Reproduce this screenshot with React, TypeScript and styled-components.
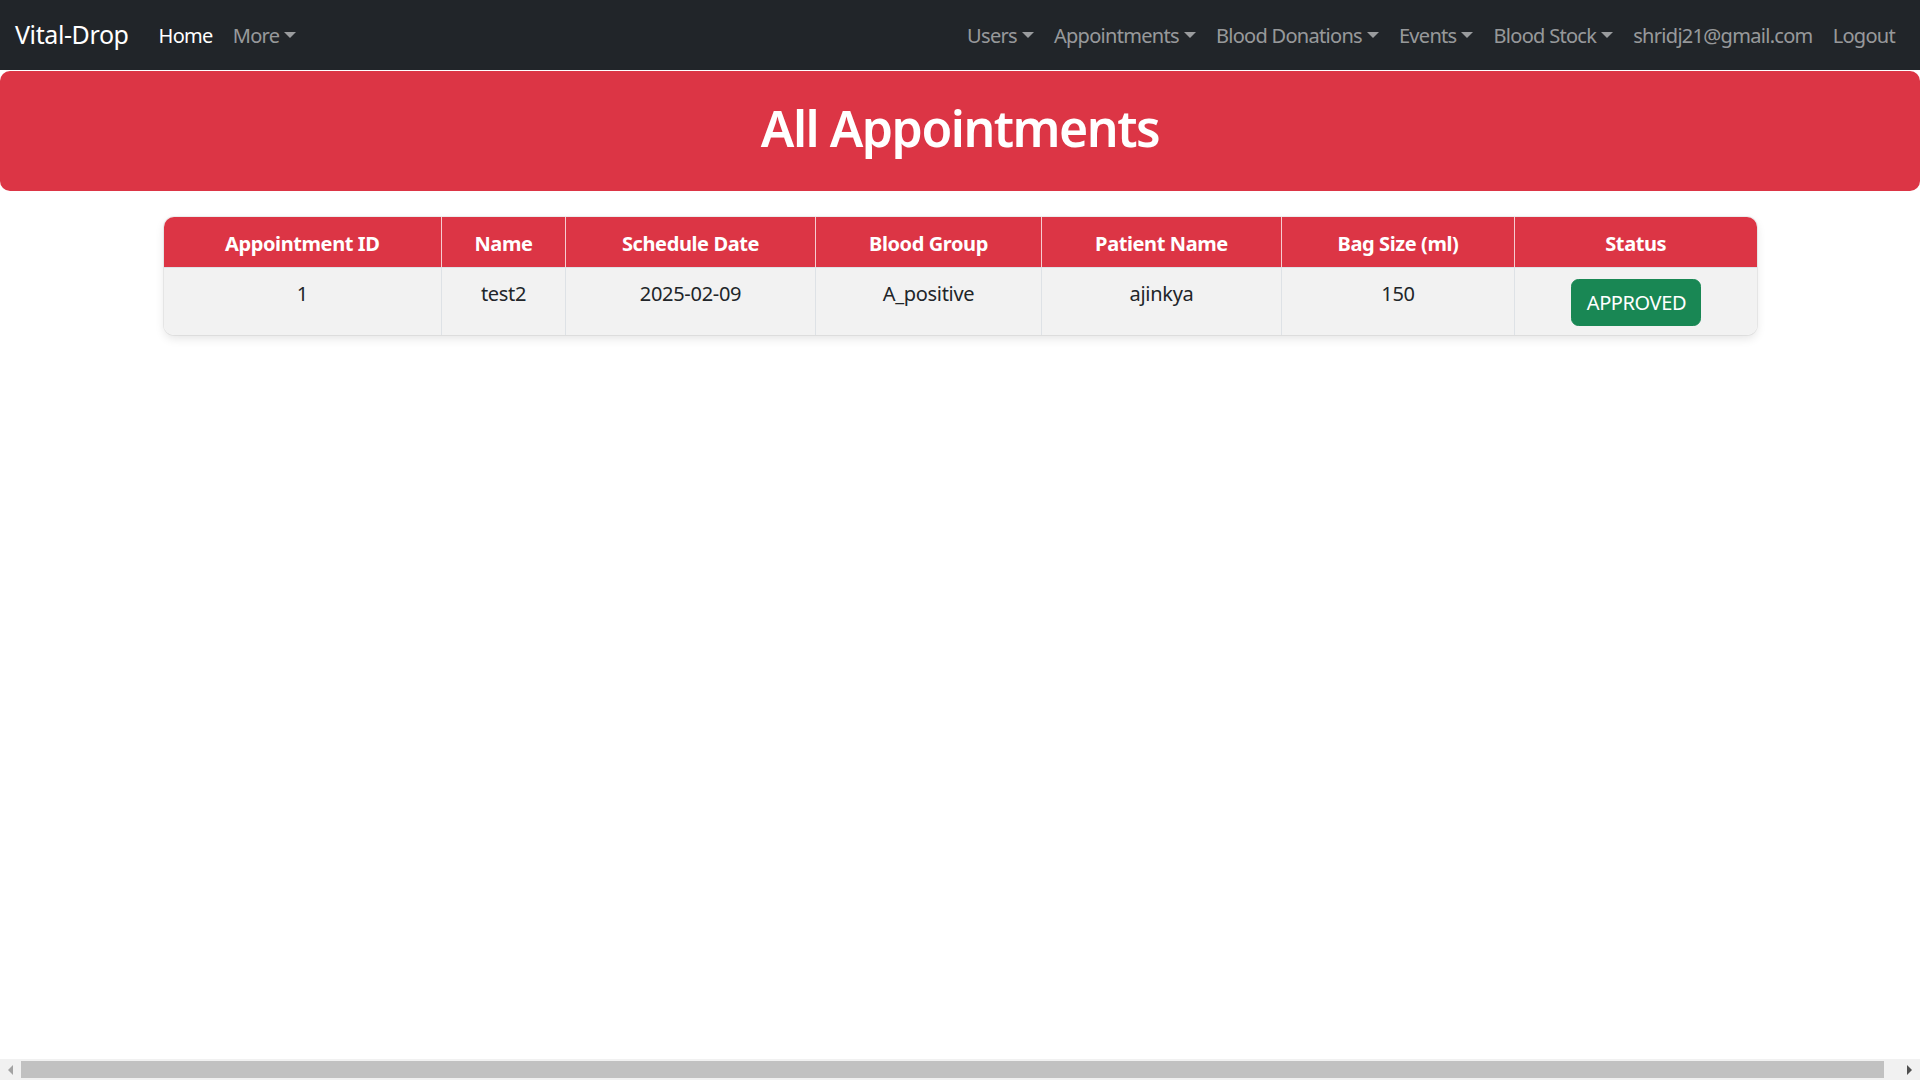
import React from "react";
import styled, { createGlobalStyle } from "styled-components";

const GlobalStyle = createGlobalStyle`
  html, body { margin: 0; padding: 0; overflow: hidden; }
  body {
    font-family: "Noto Sans", "Open Sans", "Liberation Sans", sans-serif;
    font-size: 20px;
    line-height: 1.5;
    color: #212529;
    background: #fff;
  }
  * { box-sizing: border-box; }
`;

const Page = styled.div`
  min-height: 1080px;
  display: flex;
  flex-direction: column;
`;

const Navbar = styled.nav`
  height: 70px;
  background: #212529;
  display: flex;
  align-items: center;
  padding: 0 15px;
`;

const Brand = styled.a`
  font-size: 25px;
  color: #fff;
  margin-right: 20px;
  padding: 6px 0;
  text-decoration: none;
  line-height: 1.5;
  letter-spacing: -0.4px;
`;

const NavGroup = styled.div<{ $right?: boolean }>`
  display: flex;
  align-items: center;
  margin-left: ${(p) => (p.$right ? "auto" : "0")};
`;

const NavLink = styled.a<{ $active?: boolean }>`
  display: flex;
  align-items: center;
  padding: 11px 10px 9px;
  color: ${(p) => (p.$active ? "#fff" : "rgba(255,255,255,0.55)")};
  text-decoration: none;
  font-size: 20px;
  letter-spacing: -0.7px;
`;

const Caret = styled.span`
  display: inline-block;
  margin-left: 5px;
  width: 0;
  height: 0;
  border-top: 6px solid currentColor;
  border-left: 6px solid transparent;
  border-right: 6px solid transparent;
  transform: translateY(-1px);
`;

const Banner = styled.header`
  margin-top: 1px;
  height: 120px;
  background: #dc3545;
  border-radius: 10px;
  display: flex;
  align-items: center;
  justify-content: center;
`;

const Title = styled.h1`
  margin: 0;
  color: #fff;
  font-size: 50px;
  font-weight: 600;
  line-height: 1.2;
  letter-spacing: -1.5px;
  transform: translateY(-3px);
`;

const TableWrap = styled.div`
  width: 1593px;
  margin: 26px auto 0;
  border-radius: 10px;
  overflow: hidden;
  box-shadow: 0 0 0 1px rgba(0, 0, 0, 0.06), 0 4px 10px rgba(0, 0, 0, 0.1);
`;

const Table = styled.table`
  width: 100%;
  border-collapse: collapse;
  table-layout: fixed;
`;

const Col = styled.col<{ $w: number }>`
  width: ${(p) => p.$w}px;
`;

const Th = styled.th`
  background: #dc3545;
  color: #fff;
  font-weight: 700;
  font-size: 20px;
  padding: 12px 10px 8px;
  line-height: 30px;
  text-align: center;
  border-left: 1px solid rgba(255, 255, 255, 0.75);
  border-bottom: 1px solid #dee2e6;
  letter-spacing: -0.4px;
  &:first-child { border-left: none; }
`;

const Td = styled.td`
  background: #f2f2f2;
  padding: 11px 10px 9px;
  line-height: 30px;
  text-align: center;
  vertical-align: top;
  border-left: 1px solid #dee2e6;
  font-size: 20px;
  color: #212529;
  letter-spacing: -0.3px;
  &:first-child { border-left: none; }
`;

const StatusButton = styled.button`
  background: #198754;
  color: #fff;
  border: 1px solid #198754;
  border-radius: 7.5px;
  padding: 8px 15px 7px;
  font-family: inherit;
  font-size: 20px;
  line-height: 30px;
  width: 130px;
  letter-spacing: -0.4px;
`;

const ScrollBar = styled.div`
  position: fixed;
  left: 0;
  right: 0;
  bottom: 0;
  height: 21px;
  background: #f1f1f1;
  display: flex;
  align-items: center;
`;

const ArrowBox = styled.div`
  width: 21px;
  height: 21px;
  display: flex;
  align-items: center;
  justify-content: center;
  flex-shrink: 0;
`;

const Arrow = styled.span<{ $dir: "left" | "right"; $color: string }>`
  width: 0;
  height: 0;
  border-top: 5px solid transparent;
  border-bottom: 5px solid transparent;
  ${(p) =>
    p.$dir === "left"
      ? `border-right: 5px solid ${p.$color};`
      : `border-left: 5px solid ${p.$color};`}
`;

const Thumb = styled.div`
  flex: 1;
  height: 17px;
  background: #c1c1c1;
  margin-right: 15px;
`;

const cols = [278, 124, 250, 226, 240, 233, 242];
const headers = [
  "Appointment ID",
  "Name",
  "Schedule Date",
  "Blood Group",
  "Patient Name",
  "Bag Size (ml)",
  "Status",
];

const rows = [
  {
    id: "1",
    name: "test2",
    date: "2025-02-09",
    group: "A_positive",
    patient: "ajinkya",
    bag: "150",
    status: "APPROVED",
  },
];

export default function App() {
  return (
    <>
      <GlobalStyle />
      <Page>
        <Navbar>
          <Brand href="#">Vital-Drop</Brand>
          <NavGroup>
            <NavLink $active href="#">Home</NavLink>
            <NavLink href="#">More<Caret /></NavLink>
          </NavGroup>
          <NavGroup $right>
            <NavLink href="#">Users<Caret /></NavLink>
            <NavLink href="#">Appointments<Caret /></NavLink>
            <NavLink href="#">Blood Donations<Caret /></NavLink>
            <NavLink href="#">Events<Caret /></NavLink>
            <NavLink href="#">Blood Stock<Caret /></NavLink>
            <NavLink href="#">shridj21@gmail.com</NavLink>
            <NavLink href="#">Logout</NavLink>
          </NavGroup>
        </Navbar>
        <Banner>
          <Title>All Appointments</Title>
        </Banner>
        <TableWrap>
          <Table>
            <colgroup>
              {cols.map((w, i) => (
                <Col key={i} $w={w} />
              ))}
            </colgroup>
            <thead>
              <tr>
                {headers.map((h) => (
                  <Th key={h}>{h}</Th>
                ))}
              </tr>
            </thead>
            <tbody>
              {rows.map((r) => (
                <tr key={r.id}>
                  <Td>{r.id}</Td>
                  <Td>{r.name}</Td>
                  <Td>{r.date}</Td>
                  <Td>{r.group}</Td>
                  <Td>{r.patient}</Td>
                  <Td>{r.bag}</Td>
                  <Td>
                    <StatusButton>{r.status}</StatusButton>
                  </Td>
                </tr>
              ))}
            </tbody>
          </Table>
        </TableWrap>
      </Page>
      <ScrollBar>
        <ArrowBox>
          <Arrow $dir="left" $color="#a3a3a3" />
        </ArrowBox>
        <Thumb />
        <ArrowBox>
          <Arrow $dir="right" $color="#505050" />
        </ArrowBox>
      </ScrollBar>
    </>
  );
}
